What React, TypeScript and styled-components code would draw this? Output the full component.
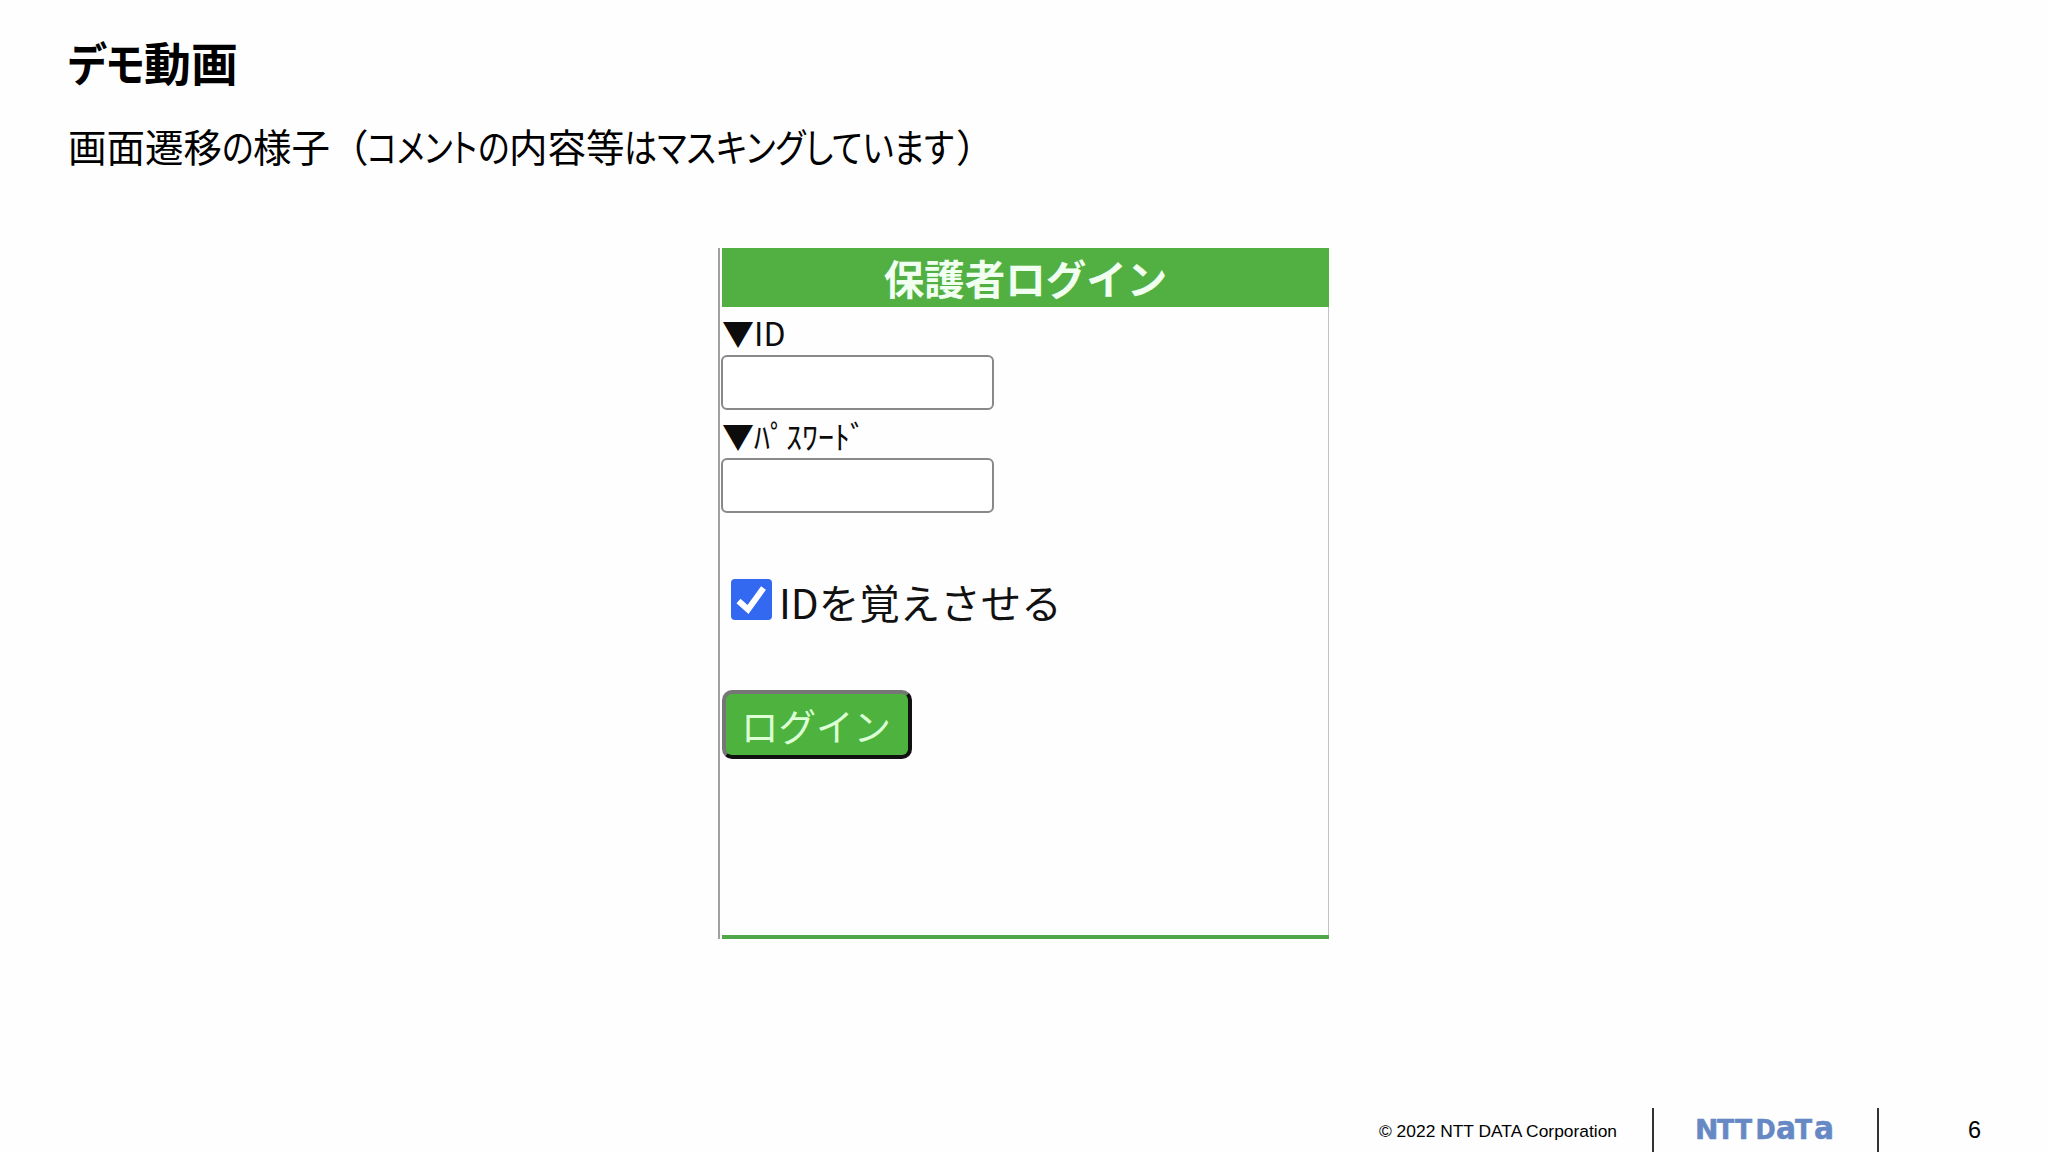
import React, { FunctionComponent } from 'react';
import styled, { createGlobalStyle } from 'styled-components';

interface RunProps {
  $width: number;
  $scale?: number;
  $full?: boolean;
}

interface TextRun {
  text: string;
  width: number;
  scale: number;
  full?: boolean;
}

interface Glyph {
  char: string;
  width: number;
  size: number;
  scale: number;
}

const titleRuns: TextRun[] = [
  { text: 'デモ', width: 76, scale: 0.88 },
  { text: '動画', width: 94, scale: 1.02 },
];

const leadRuns: TextRun[] = [
  { text: '画面遷移', width: 154, scale: 1 },
  { text: 'の', width: 31, scale: 0.85 },
  { text: '様子', width: 77, scale: 1 },
  { text: '（', width: 37, scale: 1, full: true },
  { text: 'コメント', width: 111, scale: 0.82 },
  { text: 'の', width: 31, scale: 0.85 },
  { text: '内容等', width: 115, scale: 1 },
  { text: 'はマスキングしています', width: 332, scale: 0.857 },
  { text: '）', width: 38, scale: 1, full: true },
];

const logoGlyphs: Glyph[] = [
  { char: 'N', width: 22.5, size: 27, scale: 1.15 },
  { char: 'T', width: 18, size: 27, scale: 1.03 },
  { char: 'T', width: 20.5, size: 27, scale: 1.03 },
  { char: 'D', width: 20, size: 27, scale: 1 },
  { char: 'a', width: 19.5, size: 32, scale: 1.03 },
  { char: 'T', width: 19, size: 27, scale: 1.03 },
  { char: 'a', width: 20, size: 32, scale: 1.03 },
];

const LoginScreen: FunctionComponent = () => (
  <Screen>
    <ScreenTitle>保護者ログイン</ScreenTitle>
    <Form>
      <Field>
        <FieldLabel htmlFor="login-id">▼ID</FieldLabel>
        <Input id="login-id" type="text" />
      </Field>
      <Field>
        <FieldLabel htmlFor="login-password">▼ﾊﾟｽﾜｰﾄﾞ</FieldLabel>
        <Input id="login-password" type="password" />
      </Field>
      <Remember>
        <Checkbox>
          <svg width="41" height="41" viewBox="0 0 41 41">
            <path d="M7.5 22 L17 30.5 L32.5 9" fill="none" stroke="#fff" strokeWidth="6" />
          </svg>
        </Checkbox>
        <span>IDを覚えさせる</span>
      </Remember>
      <LoginButton type="button">ログイン</LoginButton>
    </Form>
    <ScreenBase />
  </Screen>
);

const Logo: FunctionComponent = () => (
  <LogoBox>
    {logoGlyphs.map((g, i) => (
      <LogoGlyph key={i} $width={g.width} $scale={g.scale} $size={g.size}>
        <span>{g.char}</span>
      </LogoGlyph>
    ))}
  </LogoBox>
);

const App: FunctionComponent = () => (
  <Slide>
    <GlobalStyle />
    <Title>
      {titleRuns.map((r, i) => (
        <Run key={i} $width={r.width} $scale={r.scale}>
          <span>{r.text}</span>
        </Run>
      ))}
    </Title>
    <Lead>
      {leadRuns.map((r, i) => (
        <Run key={i} $width={r.width} $scale={r.scale} $full={r.full}>
          <span>{r.text}</span>
        </Run>
      ))}
    </Lead>
    <Stage>
      <LoginScreen />
    </Stage>
    <Footer>
      <Copyright>© 2022 NTT DATA Corporation</Copyright>
      <LogoCell>
        <Logo />
      </LogoCell>
      <PageNumber>6</PageNumber>
    </Footer>
  </Slide>
);

const GlobalStyle = createGlobalStyle`
  body {
    margin: 0;
    background: #fefefe;
  }
  * {
    box-sizing: border-box;
  }
`;

const Slide = styled.div`
  display: flex;
  flex-direction: column;
  width: 2048px;
  height: 1152px;
  overflow: hidden;
  color: #000;
  font-family: 'Noto Sans CJK JP', sans-serif;
`;

// proportional kana are narrower than the kanji around them
const Run = styled.span<RunProps>`
  flex: none;
  width: ${p => p.$width}px;
  span {
    display: inline-block;
    transform: scaleX(${p => p.$scale || 1});
    transform-origin: 0 50%;
    font-feature-settings: ${p => (p.$full ? 'normal' : "'palt'")};
  }
`;

const Title = styled.h1`
  display: flex;
  margin: 0;
  padding: 29px 0 0 68px;
  height: 112px;
  font-size: 46px;
  line-height: 64px;
  font-weight: 700;
  white-space: nowrap;
`;

const Lead = styled.p`
  display: flex;
  margin: 0;
  padding-left: 68px;
  height: 136px;
  font-size: 38.5px;
  line-height: 66px;
  font-weight: 400;
  white-space: nowrap;
`;

const Stage = styled.main`
  flex: 1;
  padding-left: 718px;
`;

const Screen = styled.section`
  display: flex;
  flex-direction: column;
  width: 611px;
  height: 691px;
  padding-left: 2px;
  border-left: 2px solid #a0a0a0;
  border-right: 1px solid #c8c0c8;
`;

const ScreenTitle = styled.h2`
  margin: 0 -1px 0 0;
  height: 59px;
  background: #52b043;
  color: #f0fff0;
  font-size: 40.5px;
  line-height: 59px;
  font-weight: 700;
  text-align: center;
`;

const Form = styled.form`
  display: flex;
  flex: 1;
  flex-direction: column;
  align-items: flex-start;
`;

const ScreenBase = styled.div`
  height: 4px;
  margin: 0 -1px 0 0;
  background: #52a64a;
`;

const Field = styled.div`
  display: flex;
  flex-direction: column;
  height: 103px;
`;

const FieldLabel = styled.label`
  height: 48px;
  font-size: 32px;
  line-height: 50px;
  color: #0c0c0c;
`;

const Input = styled.input`
  width: 273px;
  height: 55px;
  margin-left: -1px;
  border: 2px solid #898989;
  border-radius: 6px;
  background: #fff;
`;

const Remember = styled.label`
  display: flex;
  margin-top: 60px;
  padding-left: 9px;
  gap: 7px;
  height: 60px;
  font-size: 40.5px;
  line-height: 58px;
  color: #111;
`;

const Checkbox = styled.span`
  width: 41px;
  height: 41px;
  margin-top: 6px;
  border-radius: 4px;
  background: #3369f0;
  svg {
    display: block;
  }
`;

const LoginButton = styled.button`
  width: 190px;
  height: 69px;
  margin-top: 57px;
  padding: 0 2px 0 0;
  border: 4px solid;
  border-color: #767676 #111 #111 #767676;
  border-radius: 10px;
  background: #4db33e;
  color: #dcffd6;
  font-family: inherit;
  font-size: 37.5px;
  line-height: 58px;
`;

const Footer = styled.footer`
  display: flex;
  height: 44px;
  font-family: 'Liberation Sans', sans-serif;
`;

const Copyright = styled.div`
  width: 1652px;
  padding-right: 35px;
  font-size: 17.4px;
  line-height: 46px;
  text-align: right;
`;

const LogoCell = styled.div`
  width: 227px;
  padding-left: 40.5px;
  border-left: 2px solid #333;
  border-right: 2px solid #333;
`;

const LogoBox = styled.div`
  display: flex;
  align-items: baseline;
  height: 44px;
  color: #6688c4;
  font-family: 'DejaVu Sans Condensed', 'DejaVu Sans', sans-serif;
  font-weight: 700;
  line-height: 41px;
`;

const LogoGlyph = styled.span<RunProps & { $size: number }>`
  flex: none;
  width: ${p => p.$width}px;
  font-size: ${p => p.$size}px;
  -webkit-text-stroke: 0.5px #6688c4;
  span {
    display: inline-block;
    transform: scaleX(${p => p.$scale || 1});
    transform-origin: 0 50%;
  }
`;

const PageNumber = styled.div`
  padding-left: 89px;
  font-size: 23.5px;
  line-height: 45px;
`;

export default App;
